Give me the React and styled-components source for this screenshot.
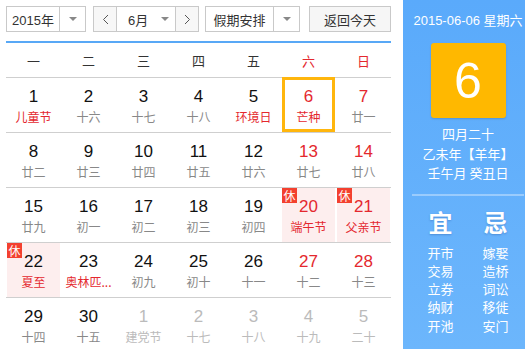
import React from "react";
import styled, { createGlobalStyle, css } from "styled-components";

const Global = createGlobalStyle`
  html, body { margin: 0; padding: 0; background: #fff; overflow: hidden; }
  body { font-family: "Liberation Sans", Arial, "Noto Sans CJK SC", sans-serif; }
`;

const Page = styled.div`
  display: flex;
  width: 533px;
  height: 349px;
`;

const Left = styled.div`
  width: 385px;
  padding: 6px 12px 0 6px;
  display: flex;
  flex-direction: column;
`;

const Toolbar = styled.div`
  display: flex;
  height: 26px;
`;

const Box = styled.div`
  display: flex;
  height: 26px;
  box-sizing: border-box;
  border: 1px solid #c9c9c9;
  background: #fff;
  width: ${(p) => p.$w}px;
  margin-left: ${(p) => p.$ml || 0}px;
  font-family: "Liberation Sans", Arial, "Noto Sans CJK SC", sans-serif;
  font-size: 13px;
  color: #333;
`;

const BoxText = styled.div`
  flex: 1;
  display: flex;
  align-items: center;
  justify-content: ${(p) => p.$justify || "center"};
  padding-left: ${(p) => p.$pl || 0}px;
`;

const CaretCell = styled.div`
  width: ${(p) => p.$w || 24}px;
  display: flex;
  align-items: center;
  justify-content: center;
  border-left: ${(p) => (p.$divider ? "1px solid #c9c9c9" : "none")};
  &::after {
    content: "";
    border-left: 4px solid transparent;
    border-right: 4px solid transparent;
    border-top: 4px solid #888;
  }
`;

const NavBtn = styled.div`
  width: 22px;
  display: flex;
  align-items: center;
  justify-content: center;
  background: #f7f7f7;
  ${(p) => (p.$side === "left" ? "border-right: 1px solid #c9c9c9;" : "border-left: 1px solid #c9c9c9;")}
`;

const TodayBtn = styled.div`
  width: 82px;
  height: 26px;
  margin-left: 9px;
  box-sizing: border-box;
  border: 1px solid #c9c9c9;
  background: #f6f6f6;
  display: flex;
  align-items: center;
  justify-content: center;
  font-size: 13px;
  color: #333;
  font-family: "Noto Sans CJK SC", sans-serif;
`;

const Grid = styled.div`
  margin-top: 9px;
  border-top: 2px solid #58a8f6;
  display: grid;
  grid-template-columns: repeat(7, 55px);
`;

const HeadCell = styled.div`
  height: 34px;
  border-bottom: 1px solid #cfcfcf;
  display: flex;
  align-items: center;
  justify-content: center;
  font-family: "Noto Sans CJK SC", sans-serif;
  font-size: 13px;
  color: ${(p) => (p.$red ? "#e4282e" : "#333")};
`;

const Cell = styled.div`
  height: 54px;
  border-bottom: 1px solid #cfcfcf;
  padding: 0 1px;
  display: flex;
`;

const Day = styled.div`
  position: relative;
  flex: 1;
  display: flex;
  flex-direction: column;
  align-items: center;
  padding-top: 10px;
  box-sizing: border-box;
  background: ${(p) => (p.$holiday ? "#fdeeee" : "transparent")};
  ${(p) =>
    p.$today &&
    css`
      box-shadow: inset 0 0 0 3px #ffb60d;
      margin-top: -1px;
      padding-top: 11px;
    `}
`;

const Num = styled.div`
  font-family: "Liberation Sans", Arial, sans-serif;
  font-size: 17px;
  line-height: 18px;
  color: ${(p) => (p.$muted ? "#bbb" : p.$red ? "#e4282e" : "#111")};
`;

const Lunar = styled.div`
  margin-top: 3px;
  font-family: "Noto Sans CJK SC", sans-serif;
  font-size: 12px;
  line-height: 16px;
  white-space: nowrap;
  color: ${(p) => (p.$muted ? "#bbb" : p.$red ? "#e4282e" : "#888")};
`;

const Badge = styled.div`
  position: absolute;
  left: 0;
  top: 0;
  width: 15px;
  height: 15px;
  background: #f3402f;
  color: #fff;
  font-family: "Noto Sans CJK SC", sans-serif;
  font-size: 12px;
  line-height: 15px;
  text-align: center;
`;

const Right = styled.div`
  width: 130px;
  background: linear-gradient(#5aaafb, #6cb6fc);
  color: #fff;
  display: flex;
  flex-direction: column;
  align-items: center;
  font-family: "Noto Sans CJK SC", sans-serif;
`;

const DateLine = styled.div`
  margin-top: 12px;
  font-size: 13px;
  line-height: 18px;
  font-family: "Liberation Sans", Arial, "Noto Sans CJK SC", sans-serif;
`;

const BigDay = styled.div`
  margin-top: 13px;
  width: 75px;
  height: 75px;
  border-radius: 3px;
  background: #ffb800;
  box-shadow: 0 1px 2px rgba(0, 0, 0, 0.15);
  display: flex;
  align-items: center;
  justify-content: center;
  font-family: "Liberation Sans", Arial, sans-serif;
  font-size: 50px;
`;

const LunarInfo = styled.div`
  margin-top: 6px;
  text-align: center;
  font-size: 13px;
  line-height: 19.5px;
`;

const Sep = styled.div`
  align-self: stretch;
  margin: 11px 9px 0;
  height: 2px;
  background: rgba(255, 255, 255, 0.35);
`;

const YiJi = styled.div`
  margin-top: 10px;
  display: grid;
  grid-template-columns: 55px 55px;
  justify-items: center;
`;

const YiJiTitle = styled.div`
  font-size: 24px;
  font-weight: bold;
  line-height: 32px;
  text-shadow: 0 1px 2px rgba(0, 40, 120, 0.25);
`;

const YiJiList = styled.div`
  margin-top: 6px;
  font-size: 13px;
  line-height: 18.3px;
  text-align: center;
`;

const Chevron = ({ dir }) => (
  <svg width="7" height="11" viewBox="0 0 7 11">
    <path
      d={dir === "left" ? "M6 1L1.5 5.5L6 10" : "M1 1L5.5 5.5L1 10"}
      fill="none"
      stroke="#555"
      strokeWidth="1"
    />
  </svg>
);

const weekdays = ["一", "二", "三", "四", "五", "六", "日"];

const days = [
  { n: 1, l: "儿童节", lr: true },
  { n: 2, l: "十六" },
  { n: 3, l: "十七" },
  { n: 4, l: "十八" },
  { n: 5, l: "环境日", lr: true },
  { n: 6, l: "芒种", lr: true, red: true, today: true },
  { n: 7, l: "廿一", red: true },
  { n: 8, l: "廿二" },
  { n: 9, l: "廿三" },
  { n: 10, l: "廿四" },
  { n: 11, l: "廿五" },
  { n: 12, l: "廿六" },
  { n: 13, l: "廿七", red: true },
  { n: 14, l: "廿八", red: true },
  { n: 15, l: "廿九" },
  { n: 16, l: "初一" },
  { n: 17, l: "初二" },
  { n: 18, l: "初三" },
  { n: 19, l: "初四" },
  { n: 20, l: "端午节", lr: true, red: true, hol: true },
  { n: 21, l: "父亲节", lr: true, red: true, hol: true },
  { n: 22, l: "夏至", lr: true, hol: true },
  { n: 23, l: "奥林匹...", lr: true },
  { n: 24, l: "初九" },
  { n: 25, l: "初十" },
  { n: 26, l: "十一" },
  { n: 27, l: "十二", red: true },
  { n: 28, l: "十三", red: true },
  { n: 29, l: "十四" },
  { n: 30, l: "十五" },
  { n: 1, l: "建党节", muted: true },
  { n: 2, l: "十七", muted: true },
  { n: 3, l: "十八", muted: true },
  { n: 4, l: "十九", muted: true },
  { n: 5, l: "二十", muted: true },
];

export default function App() {
  return (
    <>
      <Global />
      <Page>
        <Left>
          <Toolbar>
            <Box $w={80}>
              <BoxText>2015年</BoxText>
              <CaretCell $w={25} $divider />
            </Box>
            <Box $w={106} $ml={7}>
              <NavBtn $side="left">
                <Chevron dir="left" />
              </NavBtn>
              <BoxText $justify="flex-start" $pl={11}>6月</BoxText>
              <CaretCell $w={20} />
              <NavBtn $side="right">
                <Chevron dir="right" />
              </NavBtn>
            </Box>
            <Box $w={95} $ml={6}>
              <BoxText style={{ fontFamily: '"Noto Sans CJK SC", sans-serif' }}>假期安排</BoxText>
              <CaretCell $w={25} $divider />
            </Box>
            <TodayBtn>返回今天</TodayBtn>
          </Toolbar>
          <Grid>
            {weekdays.map((w, i) => (
              <HeadCell key={w} $red={i >= 5}>
                {w}
              </HeadCell>
            ))}
            {days.map((d, i) => (
              <Cell key={i}>
                <Day $holiday={d.hol} $today={d.today}>
                  {d.hol && <Badge>休</Badge>}
                  <Num $red={d.red} $muted={d.muted}>
                    {d.n}
                  </Num>
                  <Lunar $red={d.lr} $muted={d.muted}>
                    {d.l}
                  </Lunar>
                </Day>
              </Cell>
            ))}
          </Grid>
        </Left>
        <Right>
          <DateLine>2015-06-06 星期六</DateLine>
          <BigDay>6</BigDay>
          <LunarInfo>
            <div>四月二十</div>
            <div>乙未年【羊年】</div>
            <div>壬午月 癸丑日</div>
          </LunarInfo>
          <Sep />
          <YiJi>
            <YiJiTitle>宜</YiJiTitle>
            <YiJiTitle>忌</YiJiTitle>
            <YiJiList>
              <div>开市</div>
              <div>交易</div>
              <div>立券</div>
              <div>纳财</div>
              <div>开池</div>
            </YiJiList>
            <YiJiList>
              <div>嫁娶</div>
              <div>造桥</div>
              <div>词讼</div>
              <div>移徙</div>
              <div>安门</div>
            </YiJiList>
          </YiJi>
        </Right>
      </Page>
    </>
  );
}
